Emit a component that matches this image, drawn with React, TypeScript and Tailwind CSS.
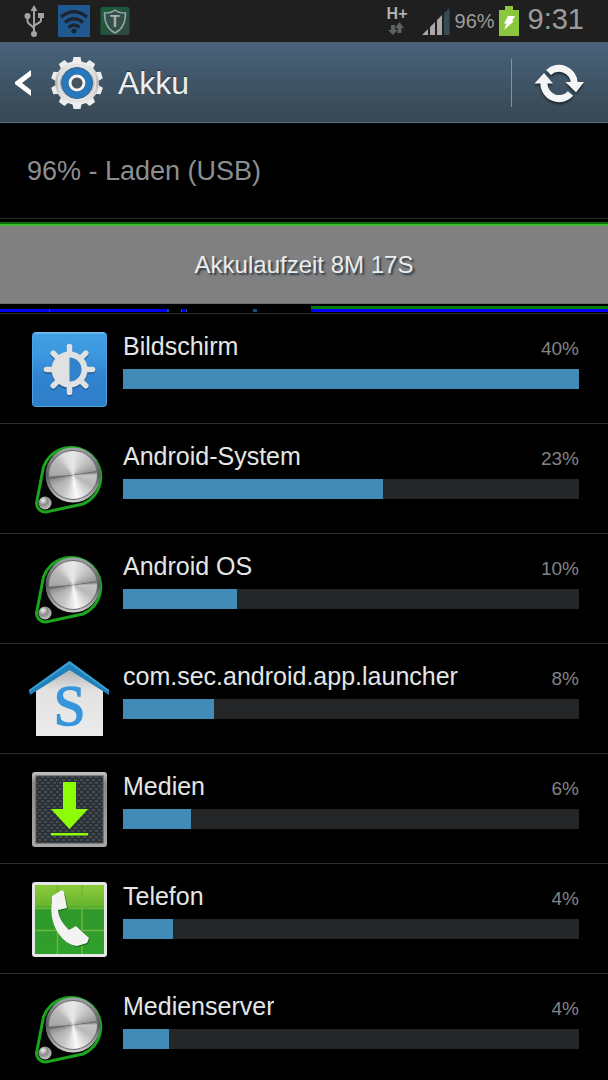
import type { ReactNode } from 'react'

const gearTeeth = [0, 36, 72, 108, 144, 180, 216, 252, 288, 324]
const sunRays = [0, 45, 90, 135, 180, 225, 270, 315]

function UsbIcon() {
  return (
    <svg className="h-8 w-5" viewBox="0 0 20 32" fill="none" stroke="#a3a3a3" strokeWidth="2">
      <path d="M10 28V4M3.500 11v5c0 4 6 4 6.500 8M17 11v4c0 4-6.500 3-7 7" />
      <path d="M10 0l3.500 6h-7z" fill="#a3a3a3" stroke="none" />
      <circle cx="3.500" cy="11" r="3" fill="#a3a3a3" stroke="none" />
      <path d="M14 8h6v5h-6z" fill="#a3a3a3" stroke="none" />
      <circle cx="10" cy="29" r="3" fill="#a3a3a3" stroke="none" />
    </svg>
  )
}

function WifiIcon() {
  return (
    <svg className="h-8 w-8" viewBox="0 0 32 32">
      <path d="M0 0h32v32H0z" fill="#1f588f" />
      <g fill="none" stroke="#1c2530" strokeWidth="3.200">
        <path d="M3 12q13-10.500 26 0" />
        <path d="M7 17.500q9-7.500 18 0" />
        <path d="M10.500 22.500q5.500-5 11 0" />
      </g>
      <circle cx="16" cy="26" r="2.600" fill="#1c2530" />
    </svg>
  )
}

function ShieldIcon() {
  return (
    <svg className="h-[30px] w-[30px]" viewBox="0 0 30 30">
      <defs>
        <linearGradient id="shieldBg" x1="0" y1="0" x2="1" y2="1">
          <stop offset="0" stopColor="#14603c" />
          <stop offset="1" stopColor="#33473f" />
        </linearGradient>
      </defs>
      <rect x="0.500" y="1" width="29" height="28" rx="2" fill="url(#shieldBg)" />
      <path d="M15 4c3 2.500 7 3 10.500 3 0 9-2 16-10.500 20C6.500 23 4.500 16 4.500 7 8 7 12 6.500 15 4z" fill="#315047" stroke="#9aa5a8" strokeWidth="1.500" />
      <text x="15" y="20.500" textAnchor="middle" fontFamily="Liberation Sans, sans-serif" fontWeight="700" fontSize="16" fill="#a7b0b2">T</text>
    </svg>
  )
}

function TransferIcon() {
  return (
    <svg className="h-[14px] w-[18px]" viewBox="0 0 18 14" fill="#5d6264">
      <path d="M4 3h4v5h2.500L6 13 1 8h3z" />
      <path d="M10.500 11h4V6H17l-4.500-6L8 6h2.500z" />
    </svg>
  )
}

function SignalIcon() {
  return (
    <svg className="h-[27px] w-[28px]" viewBox="0 0 28 27">
      <path d="M0 27l6-6v6zM8 19l5-5v13H8zM15 12l5-5v20h-5z" fill="#a8a8a8" />
      <path d="M22 5.500L27.500 0v27H22z" fill="#384b56" />
    </svg>
  )
}

function BatteryIcon() {
  return (
    <svg className="h-[30px] w-5" viewBox="0 0 20 30">
      <path d="M6 0h8v4h6v26H0V4h6z" fill="#8cc63c" />
      <path d="M9 10h7l-3 5h2L5 24l2.500-6.500H5z" fill="#fff" />
    </svg>
  )
}

function GearIcon() {
  return (
    <svg className="h-[54px] w-[54px]" viewBox="-27 -27 54 54">
      <defs>
        <linearGradient id="gearBody" x1="0" y1="0" x2="0" y2="1">
          <stop offset="0" stopColor="#f4f4f4" />
          <stop offset="0.500" stopColor="#b4b6b8" />
          <stop offset="1" stopColor="#f2f2f2" />
        </linearGradient>
      </defs>
      <g fill="#ededed">
        {gearTeeth.map((deg) => (
          <path key={deg} d="M-5-19l1.500-7h7L5-19z" transform={`rotate(${deg})`} />
        ))}
      </g>
      <circle r="22" fill="url(#gearBody)" />
      <circle r="18.500" fill="none" stroke="#e2e2e2" strokeWidth="2" />
      <circle r="15.500" fill="#2878be" stroke="#35628b" strokeWidth="1" />
      <circle r="9" fill="#1d578f" />
      <circle r="7" fill="#46545f" stroke="#f2f2f2" strokeWidth="3" />
    </svg>
  )
}

function RefreshIcon() {
  return (
    <svg className="h-[42px] w-[50px] drop-shadow-[0_2px_1px_#1c2830]" viewBox="535 62 50 42">
      <g fill="none" stroke="#f5f5f5" strokeWidth="7">
        <path d="M549.500 72.500A15.200 15.200 0 0 1 575.200 83" />
        <path d="M571.500 93.500A15.200 15.200 0 0 1 545 82" />
      </g>
      <path d="M545 73l9 10.500h-18.500zM577 92.500l-10.500-10.500H585z" fill="#f5f5f5" />
    </svg>
  )
}

function DisplayIcon() {
  return (
    <svg className="size-full" viewBox="0 0 75 75">
      <defs>
        <linearGradient id="displayBg" x1="0" y1="0" x2="0" y2="1">
          <stop offset="0" stopColor="#42a0e4" />
          <stop offset="0.350" stopColor="#3a95de" />
          <stop offset="0.600" stopColor="#3182cf" />
          <stop offset="1" stopColor="#2f7fca" />
        </linearGradient>
      </defs>
      <rect x="0.500" y="0.500" width="74" height="74" rx="3" fill="url(#displayBg)" stroke="#4da6e4" />
      <path d="M3 1h69" stroke="#8cc9f2" />
      <g stroke="#1f5c94" strokeWidth="5.500" strokeLinecap="round" transform="translate(37.500 39)">
        {sunRays.map((deg) => (
          <path key={deg} d="M0-15v-8" transform={`rotate(${deg})`} />
        ))}
      </g>
      <circle cx="37.500" cy="39" r="18" fill="#1f5c94" />
      <g stroke="#dfe1e3" strokeWidth="5.500" strokeLinecap="round" transform="translate(37.500 37.500)">
        {sunRays.map((deg) => (
          <path key={deg} d="M0-15v-8" transform={`rotate(${deg})`} />
        ))}
      </g>
      <circle cx="37.500" cy="37.500" r="18" fill="#dfe1e3" />
      <path d="M37.500 25.500a12 12 0 0 1 0 24z" fill="#3182cb" />
    </svg>
  )
}

function SystemIcon() {
  return (
    <span className="relative block size-full">
      <svg className="size-full" viewBox="0 0 75 75">
        <defs>
          <linearGradient id="discBase" x1="0" y1="0" x2="0" y2="1">
            <stop offset="0" stopColor="#a4a6aa" />
            <stop offset="0.500" stopColor="#54575c" />
            <stop offset="1" stopColor="#d0d0d0" />
          </linearGradient>
          <radialGradient id="smallDisc" cx="0.350" cy="0.300" r="0.700">
            <stop offset="0" stopColor="#f4f4f4" />
            <stop offset="0.500" stopColor="#8a8a8a" />
            <stop offset="1" stopColor="#c0c0c0" />
          </radialGradient>
        </defs>
        <path d="M4.500 61L11.500 25A29.500 29.500 0 1 1 51 62L14 70A9 9 0 0 1 4.500 61z" fill="#050505" stroke="#1aa51c" strokeWidth="3" />
        <circle cx="41" cy="33" r="27.500" fill="url(#discBase)" />
        <circle cx="41" cy="33" r="25" fill="#6d7075" />
        <circle cx="13" cy="61" r="6.500" fill="url(#smallDisc)" />
      </svg>
      <span className="absolute top-[9px] left-[17px] size-12 rounded-full bg-[conic-gradient(#e8e8e8,#d0d0d0_30deg,#b4b4b4_60deg,#9c9c9c_78deg,#6c6c6c_82deg,#c4c4c4_90deg,#b8b8b8_120deg,#dcdcdc_150deg,#fafafa_170deg,#c8c8c8_205deg,#b0b0b0_240deg,#8e8e8e_258deg,#606060_262deg,#a8a8a8_270deg,#b8b8b8_310deg,#dedede_335deg,#e8e8e8)]" />
    </span>
  )
}

function LauncherIcon() {
  return (
    <svg className="size-full overflow-visible" viewBox="0 0 75 75">
      <defs>
        <linearGradient id="houseWall" x1="0" y1="0" x2="0" y2="1">
          <stop offset="0" stopColor="#a4a7aa" />
          <stop offset="0.350" stopColor="#e2e2e2" />
          <stop offset="1" stopColor="#ebebeb" />
        </linearGradient>
      </defs>
      <path d="M4 27L37.500 3 71 27v47H4z" fill="url(#houseWall)" />
      <path d="M-3 28L37.500-1 77 28v5L37.500 8-2 33z" fill="#1f80ba" />
      <path d="M-3 28L37.500-1 77 28v2L37.500 2-3 30z" fill="#3a9dd4" />
      <text x="37.500" y="63" textAnchor="middle" fontFamily="Liberation Serif, serif" fontSize="57" fill="#3795dc" stroke="#3795dc" strokeWidth="1.500">S</text>
    </svg>
  )
}

function DownloadIcon() {
  return (
    <svg className="size-full" viewBox="0 0 75 75">
      <defs>
        <pattern id="weave" width="6" height="6" patternUnits="userSpaceOnUse">
          <path d="M0 0h6v6H0z" fill="#2c3135" />
          <path d="M0 1h3v2H0zM3 4h3v2H3z" fill="#414b52" />
        </pattern>
        <linearGradient id="downloadFrame" x1="0" y1="0" x2="0" y2="1">
          <stop offset="0" stopColor="#c4c4c4" />
          <stop offset="0.150" stopColor="#888" />
          <stop offset="1" stopColor="#a8a8a8" />
        </linearGradient>
      </defs>
      <rect width="75" height="75" rx="3" fill="url(#downloadFrame)" />
      <rect x="4" y="4" width="67" height="67" fill="url(#weave)" stroke="#4c4c4c" />
      <path d="M31 10h13v27h12L37.500 57 19 37h12z" fill="#8dfc06" />
      <path d="M19 61h37v2.500H19z" fill="#8dfc06" />
    </svg>
  )
}

function PhoneIcon() {
  return (
    <svg className="size-full" viewBox="0 0 75 75">
      <defs>
        <linearGradient id="phoneBg" x1="0" y1="0" x2="0" y2="1">
          <stop offset="0" stopColor="#8fcb3a" />
          <stop offset="0.300" stopColor="#67b52f" />
          <stop offset="0.350" stopColor="#2f982b" />
          <stop offset="1" stopColor="#30a02c" />
        </linearGradient>
      </defs>
      <rect width="75" height="75" rx="3" fill="#e6e6e6" />
      <rect x="3" y="3" width="69" height="69" fill="url(#phoneBg)" />
      <path d="M25.500 3v69M50 3v69M3 26.500h69M3 48.500h69" stroke="#6cb83a" strokeWidth="1.500" />
      <path d="M20 15l10-6 2 2 3 15-9 2c1 9 6 15 11 20l7-5 13 13-2 5-10 3C31 62 17 43 20 20z" fill="#1d6e1d" transform="translate(1 1)" />
      <path d="M20 14l10-6 2 2 3 16-9 2c1 9 6 15 11 20l7-4 13 12-2 5-10 3C31 63 16 43 20 20z" fill="#f3f3f3" />
    </svg>
  )
}

type Consumer = {
  name: string
  percent: number
  bar: number
  icon: ReactNode
}

// bar is the fill relative to the biggest consumer
const consumers: Consumer[] = [
  { name: 'Bildschirm', percent: 40, bar: 100, icon: <DisplayIcon /> },
  { name: 'Android-System', percent: 23, bar: 57, icon: <SystemIcon /> },
  { name: 'Android OS', percent: 10, bar: 25, icon: <SystemIcon /> },
  { name: 'com.sec.android.app.launcher', percent: 8, bar: 20, icon: <LauncherIcon /> },
  { name: 'Medien', percent: 6, bar: 15, icon: <DownloadIcon /> },
  { name: 'Telefon', percent: 4, bar: 11, icon: <PhoneIcon /> },
  { name: 'Medienserver', percent: 4, bar: 10, icon: <SystemIcon /> },
]

function StatusBar() {
  return (
    <div className="flex h-[42px] shrink-0 items-center justify-between bg-[#1f1f1f] pr-6 pl-6 text-[#9c9c9c]">
      <div className="flex items-center gap-[10px]">
        <UsbIcon />
        <div className="flex items-center gap-[10px] pl-1">
          <WifiIcon />
          <ShieldIcon />
        </div>
      </div>
      <div className="flex items-center">
        <div className="mr-[14px] flex flex-col">
          <span className="text-[16px] leading-[16px] font-bold text-[#b0b0b0]">H+</span>
          <TransferIcon />
        </div>
        <SignalIcon />
        <span className="ml-[5px] text-[20px] leading-6">96%</span>
        <span className="mr-[9px] ml-1">
          <BatteryIcon />
        </span>
        <span className="-mt-1 text-[29px] leading-[42px]">9:31</span>
      </div>
    </div>
  )
}

function TitleBar() {
  return (
    <header className="flex h-[81px] shrink-0 items-center border-t border-b border-t-[#4f6373] border-b-[#5c7285] bg-linear-to-b from-[#48637a] to-[#374753]">
      <button type="button" aria-label="Zurück" className="flex h-full items-center pr-[18px] pl-[15px]">
        <svg className="h-[26px] w-[17px]" viewBox="0 0 17 26">
          <path d="M16 0v6L7 13l9 7v6L0 14v-2z" fill="#fff" />
        </svg>
      </button>
      <div className="flex items-center gap-[14px]">
        <GearIcon />
        <h1 className="text-[32px] leading-10 text-[#eceeef] [text-shadow:0_-1px_1px_#25323c]">Akku</h1>
      </div>
      <div className="ml-auto h-12 w-px bg-[#8394a1]" />
      <button type="button" aria-label="Aktualisieren" className="flex h-full items-center pr-6 pl-[22px]">
        <RefreshIcon />
      </button>
    </header>
  )
}

function BatteryHistory() {
  return (
    <button type="button" className="block w-full shrink-0 border-b border-[#2c2c2c] pt-[3px] text-center">
      <span className="block h-[2px] bg-[#0c6c10]" />
      <span className="block h-[2px] bg-[#3fb737]" />
      <span className="block border-b border-[#6e6e6e] bg-[#808080] text-[24px] leading-[77px] text-[#ececec] [text-shadow:2px_2px_2px_#2c3b47]">
        Akkulaufzeit 8M 17S
      </span>
      <svg className="block h-[9px] w-full" viewBox="0 0 608 9" preserveAspectRatio="none" shapeRendering="crispEdges">
        <path d="M311 2h297v3H311z" fill="#008000" />
        <path d="M0 5h168v3H0zM182 5h4v3h-4zM311 5h297v3H311z" fill="#0000fa" />
        <path d="M49 5h1v3h-1zM167 5h2v3h-2zM181 5h1v3h-1zM186 5h1v3h-1zM253 5h4v3h-4z" fill="#1f4f80" />
      </svg>
    </button>
  )
}

function ConsumerRow({ name, percent, bar, icon }: Consumer) {
  return (
    <li className="border-b border-[#2c2c2c]">
      <button type="button" className="flex w-full gap-4 pt-[18px] pr-[29px] pb-4 pl-8 text-left">
        <span className="size-[75px] shrink-0">{icon}</span>
        <span className="min-w-0 flex-1">
          <span className="flex items-baseline justify-between">
            <span className="truncate text-[25px] leading-7 text-[#e4e6e6]">{name}</span>
            <span className="text-[19px] leading-6 text-[#808486]">{percent}%</span>
          </span>
          <span className="mt-2 block h-5 bg-[#252628]">
            <span className="block h-full bg-[#428bb7]" style={{ width: `${bar}%` }} />
          </span>
        </span>
      </button>
    </li>
  )
}

export default function App() {
  return (
    <div className="flex h-screen flex-col overflow-hidden bg-black font-['Liberation_Sans',Arial,sans-serif]">
      <StatusBar />
      <TitleBar />
      <p className="shrink-0 border-b border-[#2c2c2c] px-[27px] pt-8 pb-[31px] text-[27px] leading-8 text-[#8b8f91]">96% - Laden (USB)</p>
      <BatteryHistory />
      <ul className="min-h-0 flex-1 overflow-y-auto [scrollbar-width:none]">
        {consumers.map((item) => (
          <ConsumerRow key={item.name} {...item} />
        ))}
      </ul>
    </div>
  )
}
